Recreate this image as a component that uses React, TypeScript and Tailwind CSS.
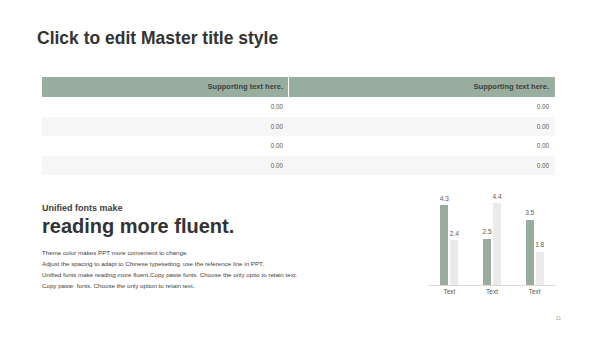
import React from "react";

const rows = ["bg-white", "bg-[#f6f6f6]", "bg-white", "bg-[#f6f6f6]"];

const data = [
  { label: "Text", a: 4.3, b: 2.4 },
  { label: "Text", a: 2.5, b: 4.4 },
  { label: "Text", a: 3.5, b: 1.8 },
];

const SCALE = 18.6;

function Bar({ value, dark }: { value: number; dark: boolean }) {
  return (
    <div className="flex flex-col items-center w-[8px]">
      <div className="text-[6.5px] leading-[8px] mb-[2.5px] text-[#595959] whitespace-nowrap">
        {value.toFixed(1)}
      </div>
      <div
        className={dark ? "w-[8px] bg-[#99ac9e]" : "w-[8px] bg-[#ebebeb]"}
        style={{ height: `${value * SCALE}px` }}
      />
    </div>
  );
}

export default function App() {
  return (
    <div
      className="w-[600px] h-[337px] bg-white flex flex-col overflow-hidden"
      style={{ fontFamily: '"Liberation Sans", Arial, sans-serif' }}
    >
      <h1 className="mt-[28px] ml-[37px] text-[17.5px] leading-[20px] font-bold text-[#333333]">
        Click to edit Master title style
      </h1>

      <div className="mt-[29px] ml-[42px] w-[513px] flex flex-col">
        <div className="grid grid-cols-[247px_266px] h-[20px] bg-[#9aae9f]">
          <div className="flex items-center justify-end pr-[5px] border-r border-white text-[7.5px] font-bold text-[#3d3d3d]">
            Supporting text here.
          </div>
          <div className="flex items-center justify-end pr-[6px] text-[7.5px] font-bold text-[#3d3d3d]">
            Supporting text here.
          </div>
        </div>
        {rows.map((bg, i) => (
          <div key={i} className={`grid grid-cols-[247px_266px] h-[19.5px] ${bg}`}>
            <div className="flex items-center justify-end pr-[6px] text-[6.3px] text-[#595959]">0.00</div>
            <div className="flex items-center justify-end pr-[6px] text-[6.3px] text-[#595959]">0.00</div>
          </div>
        ))}
      </div>

      <div className="flex">
        <div className="ml-[42px] pt-[28.4px] flex flex-col">
          <div className="text-[9px] leading-[11px] font-bold text-[#404040]">Unified fonts make</div>
          <div className="text-[20px] leading-[24px] font-bold text-[#333333]">reading more fluent.</div>
          <div className="mt-[8.3px] text-[6.2px] leading-[11px] text-[#404040] whitespace-nowrap">
            <div>Theme color makes PPT more convenient to change.</div>
            <div>Adjust the spacing to adapt to Chinese typesetting, use the reference line in PPT.</div>
            <div>Unified fonts make reading more fluent.Copy paste fonts. Choose the only optio to retain text.</div>
            <div>Copy paste&nbsp; fonts. Choose the only option to retain text.</div>
          </div>
        </div>

        <div className="ml-auto mr-[44px] mt-[11px] w-[128px] flex flex-col">
          <div className="h-[100px] flex items-end border-b border-[#d9d9d9]">
            {data.map((d, i) => (
              <div key={i} className="flex-1 flex items-end justify-center gap-[2px]">
                <Bar value={d.a} dark />
                <Bar value={d.b} dark={false} />
              </div>
            ))}
          </div>
          <div className="flex mt-[2.3px]">
            {data.map((d, i) => (
              <div key={i} className="flex-1 text-center text-[6.5px] leading-[8px] text-[#595959]">
                {d.label}
              </div>
            ))}
          </div>
        </div>
      </div>

      <div className="flex justify-end mr-[39px] mt-[19px]">
        <div className="text-[5px] leading-[6px] text-[#a6a6a6]">11</div>
      </div>
    </div>
  );
}
